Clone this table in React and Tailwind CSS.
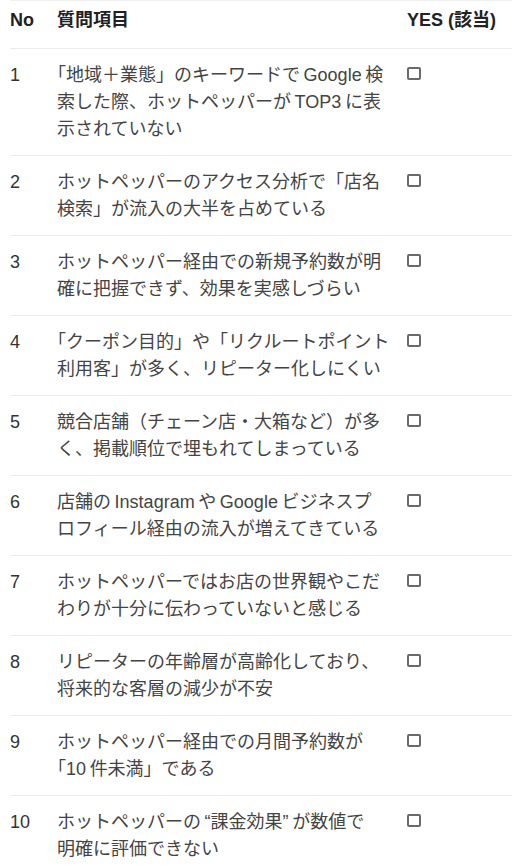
const T = "\u2009";

const rows = [
	["1", ["「地域＋業態」のキーワードで" + T + "Google" + T + "検", "索した際、ホットペッパーが" + T + "TOP3" + T + "に表", "示されていない"]],
	["2", ["ホットペッパーのアクセス分析で「店名", "検索」が流入の大半を占めている"]],
	["3", ["ホットペッパー経由での新規予約数が明", "確に把握できず、効果を実感しづらい"]],
	["4", ["「クーポン目的」や「リクルートポイント", "利用客」が多く、リピーター化しにくい"]],
	["5", ["競合店舗（チェーン店・大箱など）が多", "く、掲載順位で埋もれてしまっている"]],
	["6", ["店舗の" + T + "Instagram" + T + "や" + T + "Google" + T + "ビジネスプ", "ロフィール経由の流入が増えてきている"]],
	["7", ["ホットペッパーではお店の世界観やこだ", "わりが十分に伝わっていないと感じる"]],
	["8", ["リピーターの年齢層が高齢化しており、", "将来的な客層の減少が不安"]],
	["9", ["ホットペッパー経由での月間予約数が", "「10" + T + "件未満」である"]],
	["10", ["ホットペッパーの" + T + "“課金効果”" + T + "が数値で", "明確に評価できない"]],
];

// opening bracket at line start is set half-width, as in the original
function Line({ text }) {
	if (text.startsWith("「")) {
		return (
			<div>
				<span className="ml-[-9px]">「</span>
				{text.slice(1)}
			</div>
		);
	}
	return <div>{text}</div>;
}

export default function App() {
	return (
		<div
			className="min-h-screen bg-white text-[18px] leading-[27px]"
			style={{ fontFamily: '"Liberation Sans", "Noto Sans CJK JP", sans-serif' }}
		>
			<div className="mx-[10px] border-t border-[#f0f0f0]">
				{/* header */}
				<div className="flex pt-[6px] pb-[14px] font-bold text-[#222]">
					<div className="w-[47px] shrink-0">No</div>
					<div className="w-[350px] shrink-0">質問項目</div>
					<div className="flex-1 whitespace-nowrap">YES (該当)</div>
				</div>
				{rows.map(([no, lines]) => (
					<div key={no} className="flex border-t border-[#ececec] pt-[13px] pb-[12px]">
						<div className="w-[47px] shrink-0 text-[#333]">{no}</div>
						<div className="w-[350px] shrink-0 pr-[8px] text-[#444] whitespace-nowrap">
							{lines.map((l, i) => (
								<Line key={i} text={l} />
							))}
						</div>
						<div className="flex-1">
							<span className="block mt-[5px] w-[14px] h-[13px] border-2 border-[#6a6a6a] rounded-[2px]"></span>
						</div>
					</div>
				))}
			</div>
		</div>
	);
}
